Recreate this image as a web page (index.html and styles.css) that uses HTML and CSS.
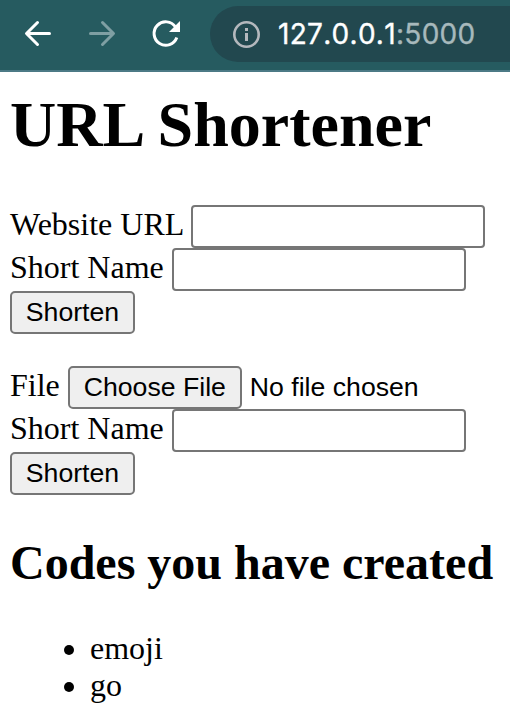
FILE: index.html
```html
<!DOCTYPE html>
<html lang="en">
<head>
<meta charset="utf-8">
<title>URL Shortener</title>
<link rel="stylesheet" href="styles.css">
</head>
<body>
<header class="toolbar">
  <svg class="nav-icons" width="200" height="70" viewBox="0 0 200 70" fill="none" stroke-width="3" stroke-linecap="round" stroke-linejoin="round">
    <path stroke="#fff" d="M49.500 33.500H27M37.500 22.500L26.500 33.500L37.500 44.500"/>
    <path stroke="#7f9fa3" d="M90.500 33.500H113M102.500 22.500L113.500 33.500L102.500 44.500"/>
    <path stroke="#fff" stroke-linecap="butt" d="M175.500 27A11.700 11.700 0 1 0 176.800 37.500"/>
    <path fill="#fff" d="M180 21V32H169Z"/>
  </svg>
  <div class="address">
    <svg class="info" width="28" height="28" viewBox="0 0 28 28">
      <circle cx="14.500" cy="14.500" r="12.200" fill="none" stroke="#b4b8bd" stroke-width="2.600"/>
      <path fill="#b4b8bd" d="M13 8h3v3h-3zM13 13h3v8h-3z"/>
    </svg>
    <span class="url">127.0.0.1<span class="port">:5000</span></span>
  </div>
</header>
<main class="page">
  <h1>URL Shortener</h1>
  <form class="form">
    <div class="row"><label for="url">Website URL</label><input class="field wide-gap" id="url" type="text"></div>
    <div class="row"><label for="name1">Short Name</label><input class="field" id="name1" type="text"></div>
    <button class="button submit" type="button">Shorten</button>
  </form>
  <form class="form">
    <div class="row"><label>File</label><button class="button choose" type="button">Choose File</button><span class="status">No file chosen</span></div>
    <div class="row"><label for="name2">Short Name</label><input class="field" id="name2" type="text"></div>
    <button class="button submit" type="button">Shorten</button>
  </form>
  <h2>Codes you have created</h2>
  <ul>
    <li>emoji</li>
    <li>go</li>
  </ul>
</main>
</body>
</html>
```
FILE: styles.css
```css
* { box-sizing: border-box; }
body {
  margin: 0;
  background: #fff;
  color: #000;
  font: 32px/37px "Liberation Serif", serif;
  overflow: hidden;
}
.toolbar {
  display: flex;
  height: 72px;
  background: #265b60;
  border-bottom: 2px solid #4c7a86;
}
.nav-icons { flex: none; margin-right: 10px; }
.address {
  flex: 1;
  display: flex;
  align-items: center;
  height: 56px;
  margin-top: 6px;
  padding-left: 22px;
  gap: 18px;
  background: #22484f;
  border-radius: 28px 0 0 28px;
}
.info { flex: none; }
.url {
  font: 28px/34px Inter, sans-serif;
  font-kerning: none;
  letter-spacing: 0.3px;
  -webkit-text-stroke: 0.35px currentColor;
  color: #fff;
  white-space: nowrap;
}
.port { color: #a7b9bc; }
.page { padding: 17px 10px 0; }
h1 { margin: 0 0 44px; font-size: 64px; line-height: 72px; }
.form { margin-bottom: 32px; }
.row { display: flex; height: 43px; gap: 8px; white-space: nowrap; }
label { line-height: 38px; }
.field {
  width: 294px;
  height: 43px;
  padding: 2px 4px;
  border: 2px solid #767676;
  border-radius: 4px;
  background: #fff;
}
.wide-gap { margin-left: -1px; }
.button, .status { font: 26.67px/36px "Liberation Sans", sans-serif; }
.button {
  display: block;
  height: 43px;
  padding: 0 0 1px;
  border: 2px solid #767676;
  border-radius: 5px;
  background: #efefef;
  color: #000;
}
.submit { width: 125px; }
.choose { width: 174px; }
.status { line-height: 42px; }
h2 { margin: 41px 0 40px; font-size: 48px; line-height: 54px; white-space: nowrap; }
ul { margin: 0; padding-left: 80px; }
```
